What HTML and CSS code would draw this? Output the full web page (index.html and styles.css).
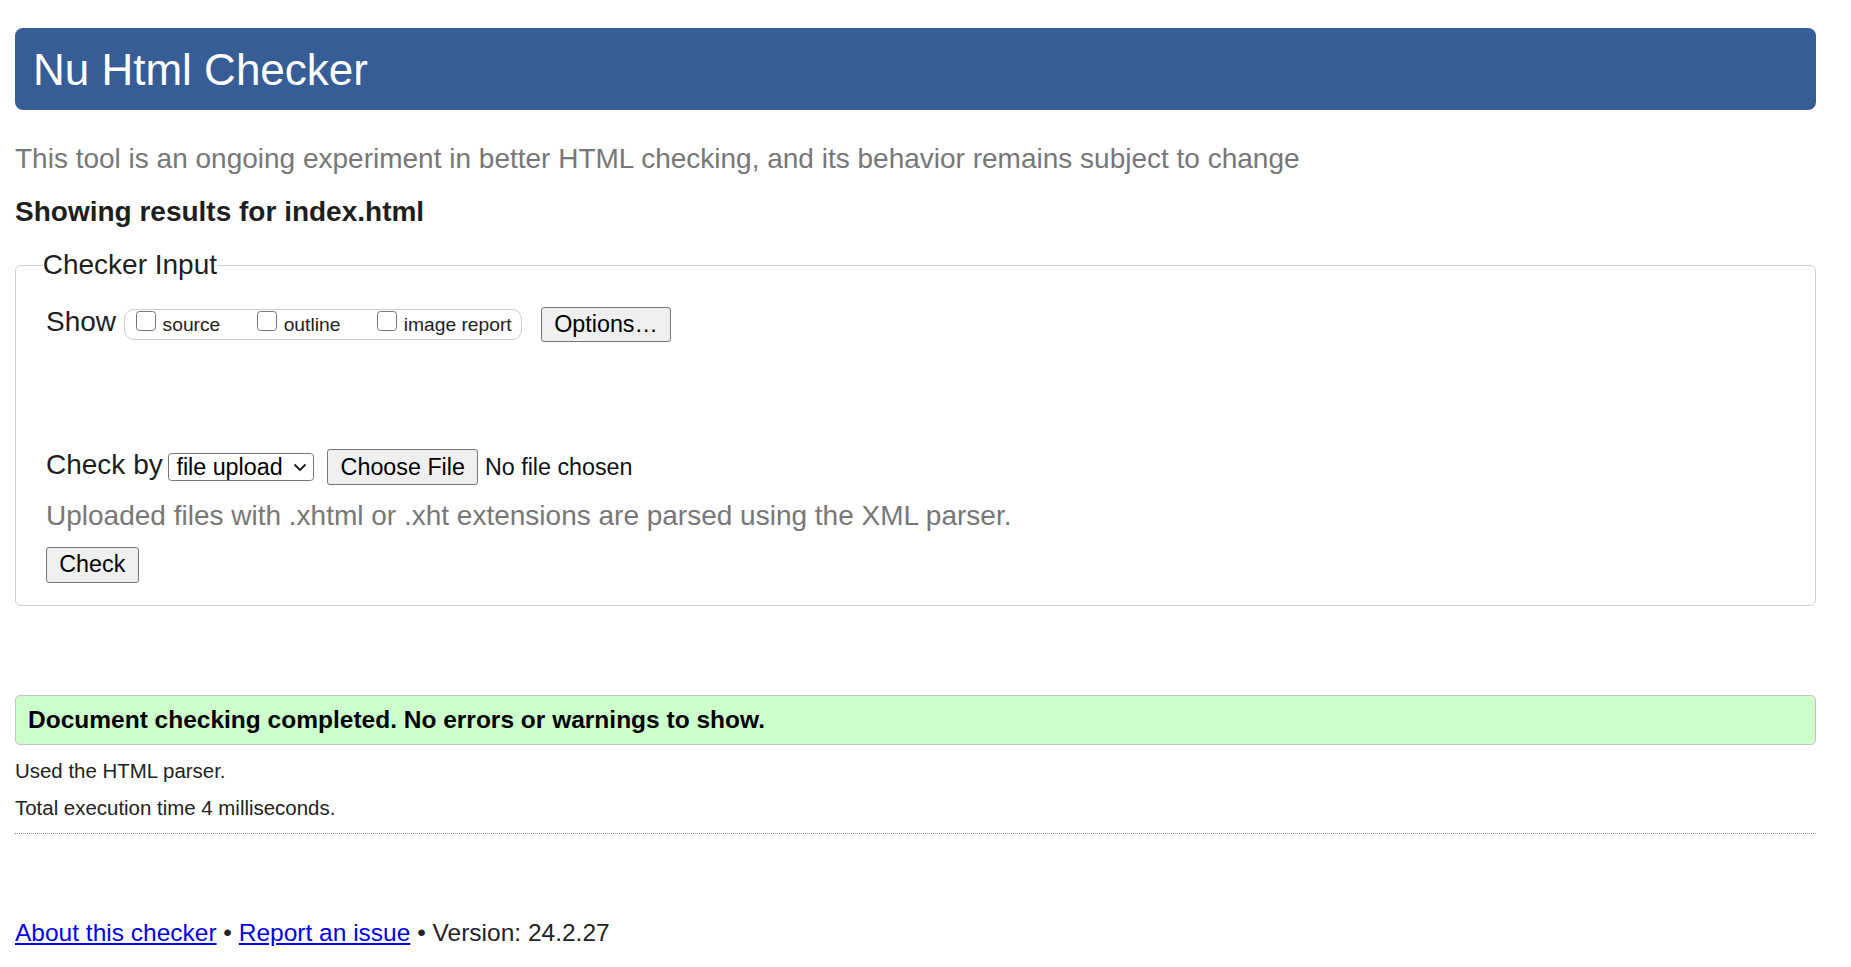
FILE: index.html
```html
<!DOCTYPE html>
<html lang="en">
<head>
<meta charset="utf-8">
<title>Showing results for index.html - Nu Html Checker</title>
<link rel="stylesheet" href="styles.css">
</head>
<body>
<div class="page">
  <h1 class="banner">Nu Html Checker</h1>
  <p class="tagline">This tool is an ongoing experiment in better HTML checking, and its behavior remains subject to change</p>
  <h2 class="results-title">Showing results for index.html</h2>
  <form class="checker-form">
    <fieldset class="checker-input">
      <legend class="checker-legend">Checker Input</legend>
      <div class="show-row">
        <span class="row-label">Show</span>
        <span class="show-options">
          <label class="opt"><input type="checkbox" class="cb"><span class="opt-text">source</span></label>
          <label class="opt"><input type="checkbox" class="cb"><span class="opt-text">outline</span></label>
          <label class="opt"><input type="checkbox" class="cb"><span class="opt-text">image report</span></label>
        </span>
        <button type="button" class="btn btn-options">Options…</button>
      </div>
      <div class="checkby-row">
        <span class="row-label">Check by</span>
        <span class="select-wrap">
          <select class="select"><option>file upload</option></select>
          <svg class="chev" width="14" height="9" viewBox="0 0 14 9" aria-hidden="true"><path d="M1.5 1.5 L7 7 L12.5 1.5" fill="none" stroke="#1a1a1a" stroke-width="1.8"/></svg>
        </span>
        <span class="file-input">
          <button type="button" class="btn btn-file">Choose File</button>
          <span class="file-name">No file chosen</span>
        </span>
      </div>
      <p class="hint">Uploaded files with .xhtml or .xht extensions are parsed using the XML parser.</p>
      <div class="submit-row"><button type="button" class="btn btn-check">Check</button></div>
    </fieldset>
  </form>
  <div class="success"><p class="success-text">Document checking completed. No errors or warnings to show.</p></div>
  <p class="stats stats-first">Used the HTML parser.</p>
  <p class="stats">Total execution time 4 milliseconds.</p>
  <hr class="sep">
  <p class="footer"><a href="#" class="link">About this checker</a> • <a href="#" class="link">Report an issue</a> • Version: 24.2.27</p>
</div>
</body>
</html>
```

FILE: styles.css
```css
html, body {
  margin: 0;
  padding: 0;
  background: #ffffff;
}

body {
  font-family: "Liberation Sans", Arial, sans-serif;
  font-size: 28px;
  color: #222222;
}

.page {
  margin: 0 35px 0 15px;
  padding-bottom: 20px;
}

.banner {
  margin: 28px 0 0 0;
  padding: 17px 18px 15px 18px;
  height: 82px;
  box-sizing: border-box;
  background: #365d95;
  color: #ffffff;
  font-size: 44px;
  font-weight: normal;
  line-height: normal;
  border-radius: 8px;
}

.tagline {
  margin: 33.4px 0 0 0;
  color: #777777;
  font-size: 28px;
}

.results-title {
  margin: 20.5px 0 0 0;
  font-size: 28px;
  font-weight: bold;
  color: #1e1e1e;
}

.checker-form {
  margin: 21.3px 0 0 0;
}

.checker-input {
  margin: 0;
  padding: 0 30px 22px 30px;
  border: 1px solid #cfcfcf;
  border-radius: 6px;
  min-width: 0;
}

.checker-legend {
  padding: 0;
  margin-left: -3.3px;
  font-size: 28px;
  color: #1e1e1e;
}

.show-row {
  display: flex;
  align-items: flex-start;
  margin-top: 24.8px;
}

.row-label {
  font-size: 28px;
  color: #1e1e1e;
  white-space: nowrap;
}

.show-row .row-label {
  margin-right: 8px;
}

.show-options {
  display: flex;
  align-items: flex-start;
  box-sizing: border-box;
  height: 31px;
  margin-top: 3.4px;
  padding: 3.5px 9.5px 0 11px;
  border: 1px solid #cccccc;
  border-radius: 10px;
}

.opt {
  display: flex;
  align-items: flex-start;
  margin-right: 36.8px;
  font-size: 19.25px;
  color: #222222;
  white-space: nowrap;
}

.opt:last-child {
  margin-right: 0;
}

.cb {
  -webkit-appearance: none;
  appearance: none;
  box-sizing: border-box;
  width: 20px;
  height: 20px;
  margin: -2.5px 6.5px 0 0;
  border: 1.75px solid #767676;
  border-radius: 3.5px;
  background: #ffffff;
}

.btn {
  box-sizing: border-box;
  height: 36px;
  margin: 0;
  padding: 0 12.3px;
  font-family: "Liberation Sans", Arial, sans-serif;
  font-size: 23.3px;
  color: #000000;
  background: #efefef;
  border: 1px solid #767676;
  border-radius: 3px;
  white-space: nowrap;
}

.btn-options {
  height: 35.3px;
  margin-left: 18.7px;
  margin-top: 1.1px;
}

.checkby-row {
  display: flex;
  align-items: flex-start;
  margin-top: 107px;
}

.checkby-row .row-label {
  margin-right: 5.3px;
}

.select-wrap {
  position: relative;
  display: block;
  margin-top: 3.5px;
  margin-right: 13.3px;
}

.select {
  -webkit-appearance: none;
  appearance: none;
  box-sizing: border-box;
  display: block;
  width: 146px;
  height: 28.3px;
  margin: 0;
  padding: 0 0 0 7.4px;
  font-family: "Liberation Sans", Arial, sans-serif;
  font-size: 23.3px;
  color: #000000;
  background: #ffffff;
  border: 1px solid #767676;
  border-radius: 3.5px;
}

.chev {
  position: absolute;
  right: 7px;
  top: 10px;
  pointer-events: none;
}

.file-input {
  display: flex;
  align-items: flex-start;
}

.btn-file {
  height: 35.7px;
}

.file-name {
  margin: 4.5px 0 0 6.7px;
  font-size: 23.3px;
  color: #111111;
  white-space: nowrap;
}

.hint {
  margin: 15.4px 0 0 0;
  color: #777777;
  font-size: 28px;
}

.submit-row {
  margin-top: 14.1px;
}

.btn-check {
  height: 36.2px;
}

.success {
  margin-top: 89px;
  box-sizing: border-box;
  height: 50px;
  padding: 0 12px;
  display: flex;
  align-items: center;
  background: #ccffcc;
  border: 1px solid #c4c4c4;
  border-radius: 5px;
}

.success-text {
  margin: 0;
  font-size: 24.5px;
  font-weight: bold;
  color: #000000;
}

.stats {
  margin: 13.2px 0 0 0;
  font-size: 20.45px;
  color: #222222;
}

.stats-first {
  margin-top: 13.8px;
}

.sep {
  margin: 13.4px 0 0 0;
  height: 0;
  border: 0;
  border-top: 1px dotted #8a8a8a;
}

.footer {
  margin: 84.9px 0 0 0;
  font-size: 24.5px;
  color: #222222;
}

.link {
  color: #0000ee;
  text-decoration: underline;
}
```
